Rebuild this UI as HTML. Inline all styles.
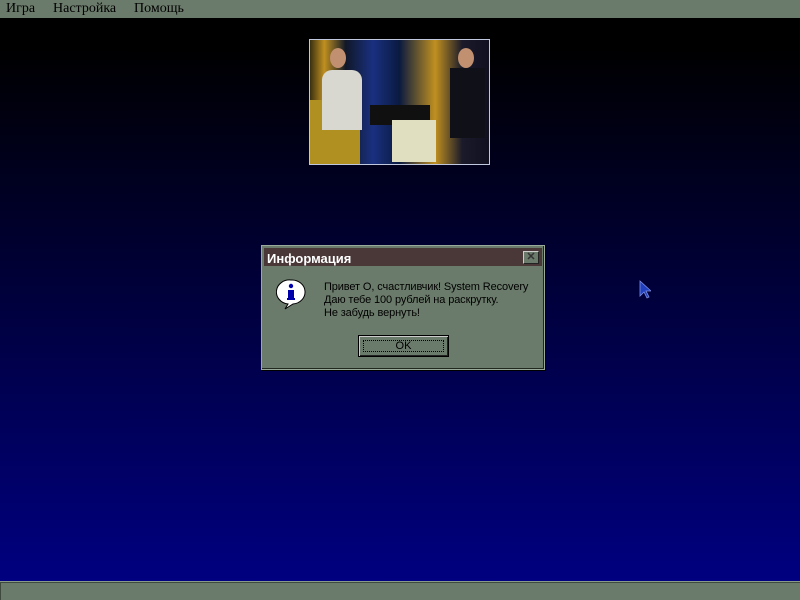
<!DOCTYPE html>
<html><head><meta charset="utf-8"><style>
*{margin:0;padding:0;box-sizing:border-box}
body{width:800px;height:600px;overflow:hidden;position:relative;font-family:"Liberation Sans",sans-serif;background:#000}
#menu{position:absolute;left:0;top:0;width:800px;height:18px;background:#6b7b6b;font-family:"Liberation Serif",serif;font-size:14px;color:#000}
#menu span{position:absolute;top:1px}
#bg{position:absolute;left:0;top:18px;width:800px;height:563px;background:linear-gradient(#000 0%,#000 5%,#000080 100%)}
#status{position:absolute;left:0;top:581px;width:800px;height:19px;background:#6b7b6b;border-top:1px solid #8a9a8a;box-shadow:inset 1px 1px 0 #3e4a3e}
#photo{position:absolute;left:309px;top:39px;width:181px;height:126px;border:1px solid #c0c8e0;background:linear-gradient(90deg,#3a3010 0%,#c09020 8%,#101828 20%,#1a3080 35%,#0a1a40 50%,#c09020 70%,#1a1a2a 85%,#101020 100%);overflow:hidden}
#dlg{position:absolute;left:261px;top:245px;width:284px;height:125px;background:#6b7b6b;border:1px solid #9aaa9a;box-shadow:inset -1px -1px 0 #202820,1px 1px 0 #000}
#title{position:absolute;left:2px;top:2px;width:278px;height:18px;background:#4a3838;color:#fff;font-weight:bold;font-size:13px;padding:3px 0 0 3px}
#x{position:absolute;right:3px;top:3px;width:16px;height:13px;background:#6b7b6b;border:1px solid #ccc;border-right-color:#222;border-bottom-color:#222;font-size:11px;line-height:11px;text-align:center;color:#333}
#msg{position:absolute;left:62px;top:35px;font-size:11px;line-height:13px;color:#000;letter-spacing:-0.12px}
#ok{position:absolute;left:96px;top:89px;width:91px;height:22px;border:1px solid #000;box-shadow:inset 1px 1px 0 #ccc,inset -1px -1px 0 #222;font-size:11px;text-align:center;line-height:20px}
#ok i{position:absolute;left:4px;top:4px;right:4px;bottom:4px;border:1px dotted #000}
</style></head><body>
<div id="menu"><span style="left:6px">Игра</span><span style="left:53px">Настройка</span><span style="left:134px">Помощь</span></div>
<div id="bg"></div>
<div id="photo">
<div style="position:absolute;left:0;top:60px;width:50px;height:66px;background:#b09020"></div>
<div style="position:absolute;left:12px;top:30px;width:40px;height:60px;background:#d8d8d0;border-radius:10px 10px 0 0"></div>
<div style="position:absolute;left:20px;top:8px;width:16px;height:20px;background:#c09070;border-radius:50%"></div>
<div style="position:absolute;left:148px;top:8px;width:16px;height:20px;background:#c09070;border-radius:50%"></div>
<div style="position:absolute;left:140px;top:28px;width:35px;height:70px;background:#101018"></div>
<div style="position:absolute;left:60px;top:65px;width:60px;height:20px;background:#101010"></div>
<div style="position:absolute;left:82px;top:80px;width:44px;height:42px;background:#e0e0c0"></div>
</div>
<div id="status"></div>
<div id="dlg">
<div id="title">Информация<div id="x">✕</div></div>
<svg style="position:absolute;left:14px;top:32px" width="30" height="32"><path d="M15 2a13 12 0 1 0 -3 24l-3 5 8-5a13 12 0 0 0 -2-24z" fill="#fff" stroke="#000"/><circle cx="15" cy="8" r="2.2" fill="#00a"/><rect x="12" y="12" width="6" height="9" fill="#00a"/><rect x="11" y="20" width="8" height="2" fill="#00a"/></svg>
<div id="msg">Привет О, счастливчик! System Recovery<br>Даю тебе 100 рублей на раскрутку.<br>Не забудь вернуть!</div>
<div id="ok"><i></i>OK</div>
</div>
<svg style="position:absolute;left:639px;top:280px" width="12" height="20"><path d="M1 1v15l4-4 3 6 2-1-3-6h5z" fill="#2040c0" stroke="#8090e0" stroke-width="0.8"/></svg>
</body></html>
